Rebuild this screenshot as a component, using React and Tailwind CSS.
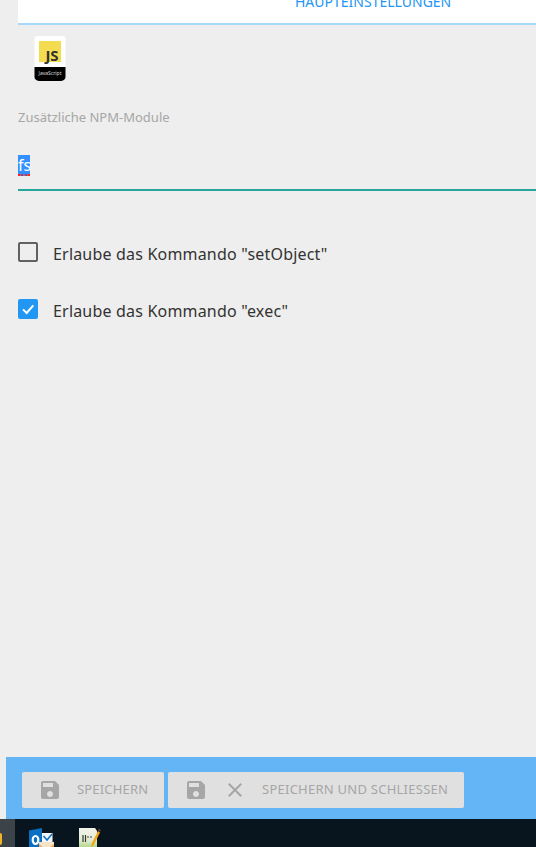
const FONT = { fontFamily: '"Noto Sans", "Open Sans", sans-serif' };

function SaveIcon({ className }) {
  return (
    <svg viewBox="0 0 24 24" className={className} fill="currentColor">
      <path d="M17 3H5c-1.11 0-2 .9-2 2v14c0 1.1.89 2 2 2h14c1.1 0 2-.9 2-2V7l-4-4zm-5 16c-1.66 0-3-1.34-3-3s1.34-3 3-3 3 1.34 3 3-1.34 3-3 3zm3-10H5V5h10v4z" />
    </svg>
  );
}

function CloseIcon({ className }) {
  return (
    <svg viewBox="0 0 24 24" className={className} fill="currentColor">
      <path d="M19 6.41 17.59 5 12 10.59 6.41 5 5 6.41 10.59 12 5 17.59 6.41 19 12 13.41 17.59 19 19 17.59 13.41 12z" />
    </svg>
  );
}

function JsLogo() {
  return (
    <svg viewBox="0 0 32 46" className="w-[32px] h-[46px] block">
      <path d="M0.5 3 Q0.5 0 3.5 0 H28.5 Q31.5 0 31.5 3 V32 H0.5 Z" fill="#ffffff" />
      <path d="M0.5 31 H31.5 V41 Q31.5 44 27 45 H5 Q0.5 44 0.5 41 Z" fill="#000000" />
      <rect x="5" y="5" width="22" height="21" fill="#f3dc4f" />
      <text x="18" y="25" textAnchor="middle" fontSize="15" fontWeight="700" fill="#333333" fontFamily="Noto Sans">JS</text>
      <text x="16" y="39" textAnchor="middle" fontSize="5" fill="#dddddd" fontFamily="Noto Sans">JavaScript</text>
    </svg>
  );
}

function OutlookIcon() {
  return (
    <svg viewBox="0 0 26 28" className="w-[26px] h-[28px] block">
      <path d="M0 5.5 L13 3 V28 H0 Z" fill="#0a6fc2" />
      <path d="M13 8 H23.5 V18 H13 Z" fill="#f4f7fa" />
      <path d="M14.5 11 L18 15 L23 9" stroke="#0a6fc2" strokeWidth="1.5" fill="none" />
      <ellipse cx="6.5" cy="15" rx="2.8" ry="4" fill="none" stroke="#ffffff" strokeWidth="2.2" />
      <path d="M10 17 H25 V28 H10 Z" fill="#f6e2c4" />
      <path d="M10 19 L17.5 25 L25 19 V28 H10 Z" fill="#e8a765" />
    </svg>
  );
}

function NotepadIcon() {
  return (
    <svg viewBox="0 0 24 28" className="w-[24px] h-[28px] block">
      <defs>
        <linearGradient id="pad" x1="0" y1="0" x2="0" y2="1">
          <stop offset="0" stopColor="#f1f3ea" />
          <stop offset="0.45" stopColor="#e4ecd4" />
          <stop offset="1" stopColor="#7fbf3a" />
        </linearGradient>
      </defs>
      <path d="M1 1 H17 L19 4 V28 H1 Z" fill="url(#pad)" />
      <path d="M5 8 V15 M7.5 8 V15" stroke="#2c3a2a" strokeWidth="1.2" />
      <path d="M9 10 H14" stroke="#444444" strokeWidth="1.2" strokeDasharray="2 1" />
      <path d="M20 4 L13.5 17 L13 20 L15.5 18.5 L22 5.5 Z" fill="#f0a81e" />
      <path d="M20.5 2.5 L22.5 3.7" stroke="#8a3a1a" strokeWidth="1.6" />
    </svg>
  );
}

function CheckRow({ checked, children, className }) {
  return (
    <label className={"flex items-center h-[20px] " + className}>
      {checked ? (
        <span className="w-[20px] h-[20px] rounded-[2px] bg-[#2196f3] flex items-center justify-center">
          <svg viewBox="0 0 24 24" className="w-[16px] h-[16px]" fill="none" stroke="#fff" strokeWidth="3">
            <path d="M4.5 12.5 L10 18 L20 6.5" />
          </svg>
        </span>
      ) : (
        <span className="w-[20px] h-[20px] rounded-[2px] border-2 border-[#616161]" />
      )}
      <span className="ml-[15px] mt-[4px] text-[16px] leading-[20px] tracking-[0.19px] text-[#333333]">{children}</span>
    </label>
  );
}

export default function App() {
  return (
    <div className="w-[536px] h-[847px] overflow-hidden flex flex-col bg-[#eeeeee]" style={FONT}>
      <div className="h-[25px] shrink-0 ml-[18px] bg-white border-b-2 border-[#a6d8fa] overflow-hidden">
        <div className="ml-[277px] -mt-[7px] text-[14px] leading-[18px] text-[#2196f3] whitespace-nowrap">
          HAUPTEINSTELLUNGEN
        </div>
      </div>

      <div className="flex-1 pl-[18px]">
        <div className="ml-[16px] mt-[11px]">
          <JsLogo />
        </div>
        <div className="mt-[27px] text-[13px] leading-[16px] text-[#a6a6a6]">Zusätzliche NPM-Module</div>
        <div className="mt-[29px] h-[37px] border-b-2 border-[#26a69a] flex items-start">
          <span className="relative mt-[1px] h-[21px] w-[12px] bg-[#3390ff] text-white text-[16px] leading-[20px] overflow-hidden block">
            fs
            <span className="absolute left-0 right-0 bottom-0 h-[2px] border-b-2 border-dotted border-[#ff2020]" />
          </span>
        </div>
        <CheckRow className="mt-[51px]">Erlaube das Kommando "setObject"</CheckRow>
        <CheckRow checked className="mt-[37px]">Erlaube das Kommando "exec"</CheckRow>
      </div>

      <div className="h-[62px] shrink-0 ml-[6px] bg-[#64b5f6] pl-[16px] pt-[15px] flex gap-[4px] items-start">
        <div className="h-[36px] w-[142px] rounded-[2px] bg-[#e0e0e0] text-[#a6a6a6] flex items-center pl-[16px]">
          <SaveIcon className="w-[24px] h-[24px]" />
          <span className="ml-[15px] text-[13px] tracking-[0.17px]">SPEICHERN</span>
        </div>
        <div className="h-[36px] w-[296px] rounded-[2px] bg-[#e0e0e0] text-[#a6a6a6] flex items-center pl-[16px]">
          <SaveIcon className="w-[24px] h-[24px]" />
          <CloseIcon className="w-[24px] h-[24px] ml-[15px]" />
          <span className="ml-[15px] text-[13px] tracking-[0.25px] whitespace-nowrap">SPEICHERN UND SCHLIESSEN</span>
        </div>
      </div>

      <div className="h-[28px] shrink-0 bg-[#09151e] flex items-start overflow-hidden">
        <div className="w-[15px] h-[28px] bg-[#3c444a] flex items-start pt-[14px] overflow-hidden">
          <span className="w-[2px] h-[12px] bg-[#f0b429] rounded-r-full" />
        </div>
        <div className="ml-[14px] mt-[6px]">
          <OutlookIcon />
        </div>
        <div className="ml-[23px] mt-[8px]">
          <NotepadIcon />
        </div>
      </div>
    </div>
  );
}
